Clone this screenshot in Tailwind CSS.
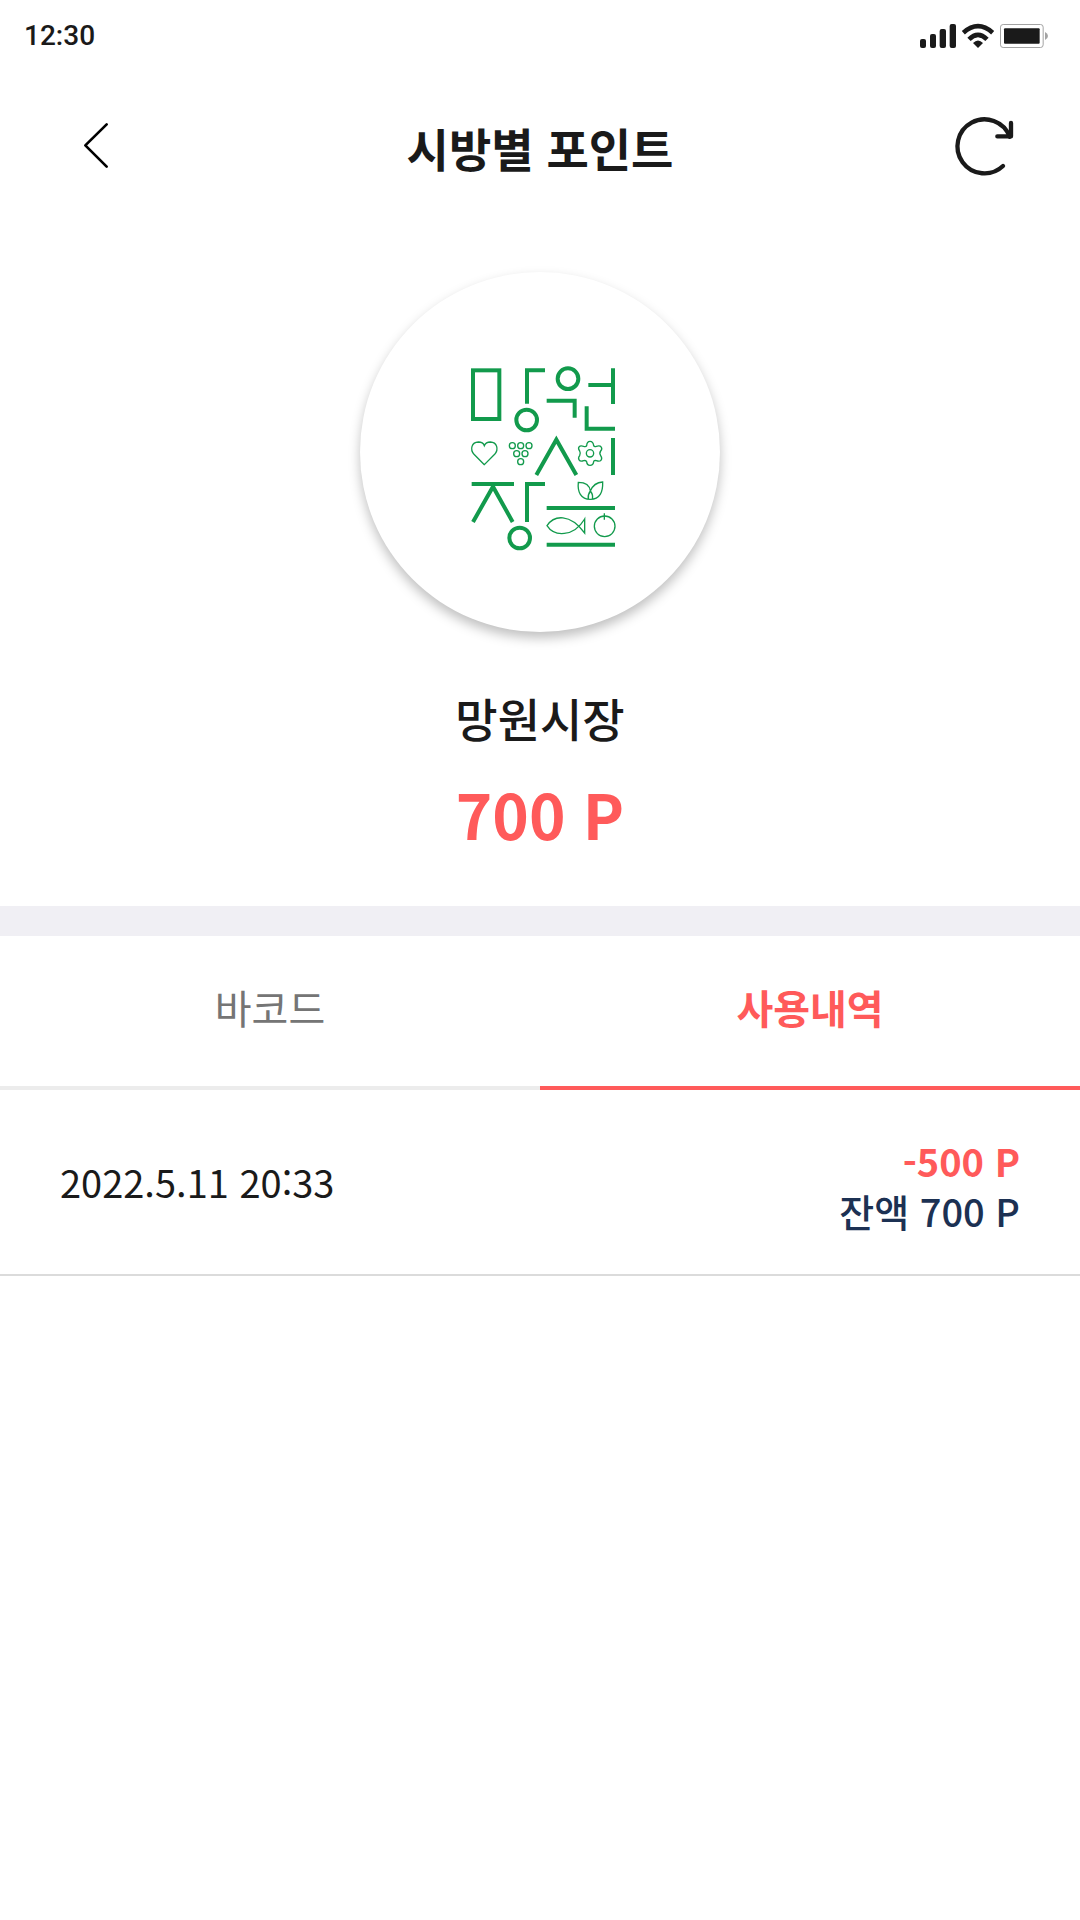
<!DOCTYPE html>
<html lang="ko">
<head>
<meta charset="utf-8">
<meta name="viewport" content="width=device-width, initial-scale=1">
<title>시방별 포인트</title>
<script src="https://cdn.jsdelivr.net/npm/@tailwindcss/browser@4"></script>
</head>
<body class="min-h-screen bg-white text-[#1a1a1a] font-['Noto_Sans_CJK_KR',sans-serif]">
  <!-- Status bar -->
  <div class="flex h-[72px] items-center justify-between pl-6 pr-[30px]">
    <span class="font-[Roboto,sans-serif] text-[28px] leading-8 font-medium">12:30</span>
    <svg class="h-7 w-[130px]" viewBox="60 66 390 84" fill="#1a1a1a" role="img" aria-label="신호, 와이파이, 배터리">
      <rect x="60" y="117" width="18" height="27" rx="6"/>
      <rect x="90" y="102" width="18" height="42" rx="6"/>
      <rect x="119" y="87" width="19" height="57" rx="6"/>
      <rect x="149" y="72" width="19" height="72" rx="6"/>
      <g fill="none" stroke="#1a1a1a" stroke-width="14">
        <path d="M190 98Q234 59 278 98"/>
        <path d="M207 118Q234 91 261 118"/>
      </g>
      <path d="M219 129Q234 114 249 129L234 144Z"/>
      <rect x="301.500" y="73.500" width="128" height="69" rx="8" fill="#fff" stroke="#a3a3a3" stroke-width="3"/>
      <rect x="312" y="85" width="107" height="46" rx="3"/>
      <path d="M435 96Q444 100 444 108T435 120Z" fill="#a3a3a3"/>
    </svg>
  </div>

  <header class="grid h-[150px] grid-cols-[1fr_auto_1fr] items-center px-[60px]">
    <button type="button" aria-label="뒤로" class="justify-self-start">
      <svg class="size-[72px]" viewBox="180 333 216 216" fill="none" stroke="#000" stroke-width="8" stroke-linecap="round" stroke-linejoin="round"><path d="M320 373L256 436L320 500"/></svg>
    </button>
    <h1 class="text-[46px] leading-[60px] font-bold">시방별 포인트</h1>
    <button type="button" aria-label="새로고침" class="justify-self-end">
      <svg class="size-[72px]" viewBox="144 333 216 216" fill="none" stroke="#1a1a1a" stroke-width="13" stroke-linecap="round" stroke-linejoin="round"><path d="M309 498A81 81 0 1 1 329 410"/><path d="M292 409H333V369"/></svg>
    </button>
  </header>

  <main>
    <section class="flex flex-col items-center pt-[50px] pb-[53px]">
      <div class="flex size-[360px] items-center justify-center rounded-full bg-white shadow-[0_6px_12px_rgba(0,0,0,0.25)]">
        <svg class="h-[210px] w-[180px]" viewBox="0 -9 540 630" fill="none" stroke="#129a4c" stroke-width="12" role="img" aria-label="망원시장 로고">
          <rect x="69" y="61" width="79" height="146"/>
          <polyline points="285,61 231,61 231,161"/>
          <circle cx="230" cy="210" r="31"/>
          <circle cx="354" cy="86" r="31"/>
          <polyline points="290,152 374,152 374,203"/>
          <path d="M415 105H489M489 55V162"/>
          <polyline points="410,169 410,236 495,236"/>
          <polyline points="259,375 319,269 379,375"/>
          <path d="M489 264V375M65 402H192M290 474H495M290 584H495"/>
          <polyline points="69,516 129,410 188,516"/>
          <polyline points="285,402 231,402 231,516"/>
          <circle cx="209" cy="564" r="31"/>
          <g stroke-width="4">
            <path d="M103 344L72 313C59 298 65 277 85 276C95 276 101 281 103 287C106 280 112 276 121 276C141 277 147 298 134 313Z"/>
            <circle cx="187" cy="287" r="9"/><circle cx="212" cy="287" r="9"/><circle cx="237" cy="287" r="9"/>
            <circle cx="200" cy="311" r="9"/><circle cx="225" cy="311" r="9"/><circle cx="212" cy="335" r="9"/>
            <circle cx="420" cy="310" r="11"/>
            <path d="M410 287C411 270 429 270 431 287Q433 291 439 289C454 284 459 295 452 303Q447 310 452 317C459 327 453 337 439 332Q432 330 431 335C429 350 411 350 410 335Q408 330 401 332C387 337 382 326 389 317Q393 310 389 303C382 294 387 284 401 289Q408 291 410 287Z"/>
            <path d="M385 397C405 397 419 406 421 423C428 406 440 397 458 396C459 426 450 448 421 448C392 448 382 425 385 397ZM421 423Q413 434 415 447M421 423Q430 434 427 447"/>
            <path d="M404 507C370 563 312 560 291 527C312 495 360 489 404 549Z"/>
            <circle cx="464" cy="529" r="31"/><path d="M463 490V509"/>
          </g>
        </svg>
      </div>
      <h2 class="mt-[55px] text-[46px] leading-[60px] font-medium">망원시장</h2>
      <p class="mt-[26px] text-[62px] leading-[80px] font-bold text-[#ff5a5a]">700 P</p>
    </section>

    <div class="h-[30px] bg-[#f0eff4]"></div>

    <div role="tablist" class="grid h-[154px] grid-cols-2 text-[40px] leading-[50px]">
      <button type="button" role="tab" aria-selected="false" class="border-b-4 border-[#ececec] pb-2 text-[#757575]">바코드</button>
      <button type="button" role="tab" aria-selected="true" class="border-b-4 border-[#ff5a5a] pb-2 font-bold text-[#ff5a5a]">사용내역</button>
    </div>

    <ul class="text-[38px] leading-[50px]">
      <li class="flex h-[186px] items-center justify-between border-b-2 border-[#dbdbdb] px-[60px]">
        <time datetime="2022-05-11T20:33">2022.5.11 20:33</time>
        <div class="pt-2 text-right font-medium">
          <p class="font-bold text-[#ff5a5a]">-500 P</p>
          <p class="text-[#1c3153]">잔액 700 P</p>
        </div>
      </li>
    </ul>
  </main>
</body>
</html>
